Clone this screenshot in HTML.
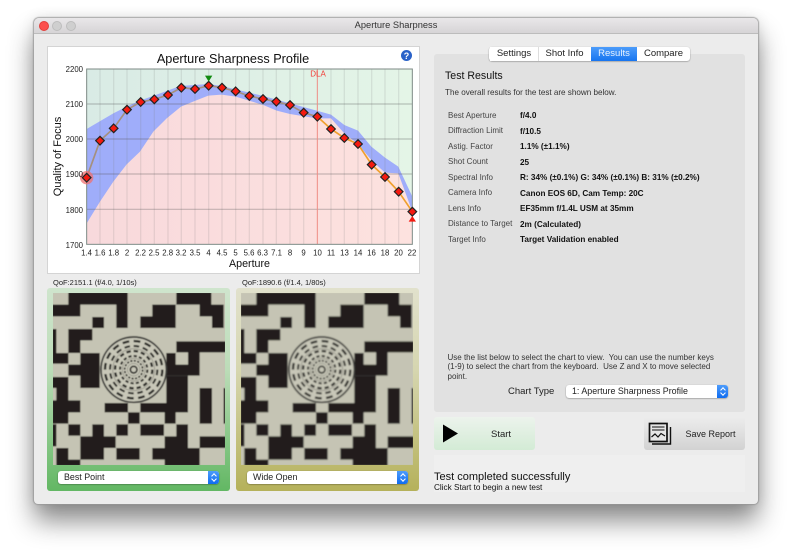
<!DOCTYPE html>
<html><head><meta charset="utf-8">
<style>
html,body{margin:0;padding:0;background:#fff}
body{width:791px;height:555px;position:relative;overflow:hidden;font-family:"Liberation Sans",sans-serif;color:#111;filter:blur(.3px)}
.abs{position:absolute}
.t{position:absolute;white-space:nowrap}
#win{position:absolute;left:34px;top:18px;width:724px;height:486px;background:#ececec;border-radius:5px 5px 4px 4px;box-shadow:0 0 1px 1px rgba(150,150,150,.8),0 17px 26px 0 rgba(0,0,0,.46),0 0 14px rgba(0,0,0,.1)}
#bar{position:absolute;left:34px;top:18px;width:724px;height:15px;background:linear-gradient(#e9e7e9,#d6d4d6);border-bottom:1px solid #bcbcbc;border-radius:5px 5px 0 0;text-align:center;font-size:9.3px;line-height:15px;color:#333}
.dot{position:absolute;top:21px;width:8px;height:8px;border-radius:50%;background:#cfcfcf;border:.5px solid #bdbdbd}
.sel{position:absolute;background:#fff;border-radius:3px;box-shadow:0 .5px 1.5px rgba(0,0,0,.4);font-size:8.9px;line-height:13px;padding-left:6px;box-sizing:border-box;color:#222}
.sel i{position:absolute;right:0;top:0;bottom:0;width:11px;background:linear-gradient(#4d9cfb,#0f6cf0);border-radius:0 3px 3px 0}
.sel i:before,.sel i:after{content:"";position:absolute;left:3.5px;width:3px;height:3px;border-left:1px solid #fff;border-top:1px solid #fff;transform:rotate(45deg);top:3px}
.sel i:after{transform:rotate(225deg);top:auto;bottom:3px}
.lab{position:absolute;left:448px;font-size:8px;color:#444;white-space:nowrap}
.val{position:absolute;left:520px;font-size:8.2px;font-weight:bold;color:#111;white-space:nowrap}
.tab{position:absolute;top:47px;height:14px;font-size:9.5px;line-height:14px;text-align:center;color:#222;background:#fff}
</style></head>
<body>
<div id="win"></div>
<div id="bar">Aperture Sharpness</div>
<div class="dot" style="left:39px;background:#fc4f4c;border-color:#e33e3b"></div>
<div class="dot" style="left:52px"></div>
<div class="dot" style="left:66px"></div>

<!-- chart panel -->
<div class="abs" style="left:47px;top:46px;width:371px;height:226px;background:#fff;border:1px solid #d4d4d4"></div>
<svg class="abs" style="left:0;top:0" width="791" height="290" viewBox="0 0 791 290">
<defs><linearGradient id="gb" x1="0" x2="1"><stop offset="0" stop-color="#d9ebe5"/><stop offset="1" stop-color="#e4f5e7"/></linearGradient>
<linearGradient id="pb" x1="0" x2="1"><stop offset="0" stop-color="#f8d9dc"/><stop offset="1" stop-color="#fde2df"/></linearGradient></defs>
<g transform="translate(30,10) scale(.33333)">
<rect x="170" y="177" width="977" height="526" fill="url(#gb)"/>
<path fill="#9fadfa" d="M170 357L250 310 290 290 330 272 410 243 450 228 535 222 575 228 700 258 860 302 903 314 943 345 984 362 1024 410 1065 443 1105 470 1147 560V703H170Z"/>
<path fill="url(#pb)" d="M170 640L210 575 250 515 290 463 330 425 370 365 410 325 453 290 494 273 535 257 575 254 617 260 700 285 740 302 780 312 860 325 903 325 943 370 984 402 1024 450 1065 488 1105 490 1147 605V703H170Z"/>
<g stroke="#7d7d7d" stroke-opacity=".16" stroke-width="4" id="vg">
<path d="M210 177V703M251 177V703M291 177V703M332 177V703M373 177V703M414 177V703M454 177V703M495 177V703M536 177V703M576 177V703M617 177V703M658 177V703M699 177V703M739 177V703M780 177V703M821 177V703M903 177V703M943 177V703M984 177V703M1025 177V703M1065 177V703M1106 177V703"/>
</g>
<g stroke="#555" stroke-opacity=".32" stroke-width="3.5">
<path d="M170 282H1147M170 387H1147M170 492H1147M170 598H1147"/>
</g>
<path d="M862 177V703" stroke="#ef8d85" stroke-width="3"/>
<rect x="170" y="177" width="977" height="526" fill="none" stroke="#7d8a85" stroke-width="3"/>
<path d="M170 503L210 392 251 355 291 299 332 276 373 268 414 255 454 233 495 237 536 227 576 233 617 244 658 258 699 267 739 275 780 285 821 308 862 320" fill="none" stroke="#a5907e" stroke-width="5"/>
<path d="M862 320L903 357 943 384 984 402 1025 464 1065 501 1106 545 1147 605" fill="none" stroke="#efa02e" stroke-width="5"/>
<circle cx="170" cy="503" r="20" fill="#f07070" fill-opacity=".75"/>
<g fill="#f41a10" stroke="#222" stroke-width="3.5" id="pts">
<path d="M170 490l13 13-13 13-13-13zM210 379l13 13-13 13-13-13zM251 342l13 13-13 13-13-13zM291 286l13 13-13 13-13-13zM332 263l13 13-13 13-13-13zM373 255l13 13-13 13-13-13zM414 242l13 13-13 13-13-13zM454 220l13 13-13 13-13-13zM495 224l13 13-13 13-13-13zM536 214l13 13-13 13-13-13zM576 220l13 13-13 13-13-13zM617 231l13 13-13 13-13-13zM658 245l13 13-13 13-13-13zM699 254l13 13-13 13-13-13zM739 262l13 13-13 13-13-13zM780 272l13 13-13 13-13-13zM821 295l13 13-13 13-13-13zM862 307l13 13-13 13-13-13zM903 344l13 13-13 13-13-13zM943 371l13 13-13 13-13-13zM984 389l13 13-13 13-13-13zM1025 451l13 13-13 13-13-13zM1065 488l13 13-13 13-13-13zM1106 532l13 13-13 13-13-13zM1147 592l13 13-13 13-13-13z"/>
</g>
<path d="M525 197H547L536 215Z" fill="#118a11"/>
<path d="M1136 635H1158L1147 618Z" fill="#f41a10"/>
</g>
<text x="233" y="63" text-anchor="middle" font-size="12.7" fill="#111">Aperture Sharpness Profile</text>
<circle cx="406.500" cy="55.500" r="5.500" fill="#2a62c8"/>
<text x="406.500" y="59" text-anchor="middle" font-size="9" font-weight="bold" fill="#fff">?</text>
<text x="318" y="76.500" text-anchor="middle" font-size="8" fill="#f23c36">DLA</text>
<g font-size="7.8" fill="#222" text-anchor="end">
<text x="83" y="72">2200</text><text x="83" y="107">2100</text><text x="83" y="142">2000</text><text x="83" y="177">1900</text><text x="83" y="213">1800</text><text x="83" y="248">1700</text>
</g>
<g font-size="7.8" fill="#222" text-anchor="middle">
<text x="86.500" y="255.500">1.4</text><text x="100" y="255.500">1.6</text><text x="113.700" y="255.500">1.8</text><text x="127" y="255.500">2</text><text x="140.500" y="255.500">2.2</text><text x="154" y="255.500">2.5</text><text x="167.700" y="255.500">2.8</text><text x="181" y="255.500">3.2</text><text x="195" y="255.500">3.5</text><text x="208.500" y="255.500">4</text><text x="222" y="255.500">4.5</text><text x="235.500" y="255.500">5</text><text x="249" y="255.500">5.6</text><text x="262.500" y="255.500">6.3</text><text x="276.500" y="255.500">7.1</text><text x="290" y="255.500">8</text><text x="303.500" y="255.500">9</text><text x="317.500" y="255.500">10</text><text x="331" y="255.500">11</text><text x="344.500" y="255.500">13</text><text x="358" y="255.500">14</text><text x="371.500" y="255.500">16</text><text x="385" y="255.500">18</text><text x="398.500" y="255.500">20</text><text x="412" y="255.500">22</text>
</g>
<text x="249.500" y="267" text-anchor="middle" font-size="10.7" fill="#111">Aperture</text>
<text transform="translate(61,156.500) rotate(-90)" text-anchor="middle" font-size="11" fill="#111">Quality of Focus</text>
</svg>

<!-- image captions -->
<div class="t" style="left:53px;top:278px;font-size:7.5px;color:#222">QoF:2151.1 (f/4.0, 1/10s)</div>
<div class="t" style="left:242px;top:278px;font-size:7.5px;color:#222">QoF:1890.6 (f/1.4, 1/80s)</div>

<!-- image panels -->
<div class="abs" style="left:47px;top:288px;width:183px;height:203px;border-radius:3px;background:linear-gradient(#cfe5cd,#bcdcb8 40%,#62b763)"></div>
<div class="abs" style="left:236px;top:288px;width:183px;height:203px;border-radius:3px;background:linear-gradient(#e1e1cc,#d6d6b0 40%,#b5b15a)"></div>

<svg class="abs" style="left:53px;top:293px" width="172" height="172" viewBox="10 10 516 516">
<defs>
<filter id="b" x="-2%" y="-2%" width="104%" height="104%"><feGaussianBlur stdDeviation="1.300"/></filter>
<filter id="b2" x="-2%" y="-2%" width="104%" height="104%"><feGaussianBlur stdDeviation="2.400"/></filter>
<g id="pat">
<rect x="8" y="8" width="520" height="520" fill="#c5c4b4"/>
<g fill="#211f1b">
<path d="M56 8H234V115H200V45H92V80H8V45H56Z"/>
<path d="M380 8H485V45H522V115H487V80H450V45H380Z"/>
<path d="M308 45H378V115H272V80H308Z"/>
<rect x="128" y="82" width="35" height="33"/>
<rect x="8" y="118" width="12" height="72"/>
<path d="M56 118H128V152H92V190H56Z"/>
<path d="M380 155H528V188H450V258H350V190H378V225H415V188H380Z"/>
<rect x="8" y="190" width="48" height="32"/>
<path d="M92 190H150V295H92V258H56V225H92Z"/>
<path d="M8 262H56V332H92V368H56V402H8V332H20V295H8Z"/>
<path d="M350 258H415V368H378V402H345V368H272V340H350Z"/>
<rect x="165" y="340" width="70" height="28"/>
<rect x="235" y="368" width="35" height="34"/>
<rect x="450" y="295" width="37" height="107"/>
<rect x="522" y="295" width="6" height="107"/>
<rect x="8" y="404" width="12" height="66"/>
<rect x="56" y="404" width="36" height="34"/>
<rect x="200" y="404" width="35" height="34"/>
<rect x="272" y="404" width="71" height="34"/>
<path d="M128 404H163V440H198V475H163V510H92V440H128Z"/>
<rect x="200" y="475" width="70" height="35"/>
<path d="M380 404H415V528H345V510H308V475H345V440H380Z"/>
<path d="M450 440H528V475H450V528H415V475H450Z"/>
<path d="M20 475H56V510H92V528H20Z"/>
</g>
<g transform="translate(252,240)" fill="none">
<circle r="98" fill="#c8c7b8" stroke="#3b3a38" stroke-width="5"/>
<g stroke="#2a2927">
<circle r="86" stroke-width="7" pathLength="16" stroke-dasharray=".6 .4"/>
<circle r="71" stroke-width="6" pathLength="16" stroke-dasharray=".6 .4"/>
<circle r="56" stroke-width="7" pathLength="16" stroke-dasharray=".6 .4"/>
<circle r="41" stroke-width="6" pathLength="16" stroke-dasharray=".6 .4"/>
<circle r="27" stroke-width="5" pathLength="16" stroke-dasharray=".6 .4"/>
</g>
<g stroke="#55534f" stroke-width="1.200">
<circle r="63"/><circle r="34"/><circle r="19"/>
</g>
<circle r="10" stroke="#2a2927" stroke-width="5" fill="#c8c7b8"/>
</g>
</g>
</defs>
<g filter="url(#b)"><use href="#pat"/></g>
</svg>
<svg class="abs" style="left:241px;top:293px" width="172" height="172" viewBox="10 10 516 516">
<g filter="url(#b2)"><use href="#pat"/></g>
</svg>

<div class="sel" style="left:58px;top:471px;width:161px;height:13px">Best Point<i></i></div>
<div class="sel" style="left:247px;top:471px;width:161px;height:13px">Wide Open<i></i></div>

<!-- right panel -->
<div class="abs" style="left:434px;top:54px;width:311px;height:358px;background:#e1e1e1;border-radius:3px"></div>
<div class="abs" style="left:489px;top:47px;width:201px;height:14px;background:#fff;border-radius:3px;box-shadow:0 .5px 1.5px rgba(0,0,0,.4)"></div>
<div class="tab" style="left:490px;width:48px;border-right:1px solid #ddd">Settings</div>
<div class="tab" style="left:539px;width:51px">Shot Info</div>
<div class="tab" style="left:591px;width:46px;background:linear-gradient(#4c9cfa,#1775f0);color:#e8f2ff">Results</div>
<div class="tab" style="left:638px;width:51px;border-radius:0 3px 3px 0">Compare</div>

<div class="t" style="left:445px;top:69.500px;font-size:10.6px;color:#111">Test Results</div>
<div class="t" style="left:445px;top:88px;font-size:8.1px;color:#333">The overall results for the test are shown below.</div>

<div class="lab" style="top:110.500px">Best Aperture</div><div class="val" style="top:111px">f/4.0</div>
<div class="lab" style="top:126px">Diffraction Limit</div><div class="val" style="top:126.500px">f/10.5</div>
<div class="lab" style="top:141.500px">Astig. Factor</div><div class="val" style="top:142px">1.1% (±1.1%)</div>
<div class="lab" style="top:157px">Shot Count</div><div class="val" style="top:157.500px">25</div>
<div class="lab" style="top:172.500px">Spectral Info</div><div class="val" style="top:173px">R: 34% (±0.1%) G: 34% (±0.1%) B: 31% (±0.2%)</div>
<div class="lab" style="top:188px">Camera Info</div><div class="val" style="top:188.500px">Canon EOS 6D, Cam Temp: 20C</div>
<div class="lab" style="top:203.500px">Lens Info</div><div class="val" style="top:204px">EF35mm f/1.4L USM at 35mm</div>
<div class="lab" style="top:219px">Distance to Target</div><div class="val" style="top:219.500px">2m (Calculated)</div>
<div class="lab" style="top:234.500px">Target Info</div><div class="val" style="top:235px">Target Validation enabled</div>

<div class="t" style="left:447.500px;top:352.500px;font-size:8px;line-height:9.500px;color:#333">Use the list below to select the chart to view.&nbsp; You can use the number keys<br>(1-9) to select the chart from the keyboard.&nbsp; Use Z and X to move selected<br>point.</div>
<div class="t" style="left:508px;top:386px;font-size:9.500px;color:#222">Chart Type</div>
<div class="sel" style="left:566px;top:385px;width:162px;height:13px">1: Aperture Sharpness Profile<i></i></div>

<!-- buttons -->
<div class="abs" style="left:434px;top:417px;width:101px;height:33px;border-radius:3px;background:linear-gradient(#ecf3ec,#d3ebd5)"></div>
<svg class="abs" style="left:442px;top:424px" width="18" height="20"><path d="M1 .5L16 9.500 1 18.500Z" fill="#000"/></svg>
<div class="t" style="left:491px;top:429px;font-size:9.500px;color:#222">Start</div>
<div class="abs" style="left:644px;top:417px;width:101px;height:33px;border-radius:3px;background:linear-gradient(#ececec,#d2d2d2)"></div>
<svg class="abs" style="left:647px;top:421px" width="26" height="26" viewBox="0 0 26 26" fill="none" stroke="#111">
<path d="M5 23H23.500V6" stroke-width="1.400"/><rect x="2.500" y="2.500" width="17.500" height="18" stroke-width="1.700" fill="#e6e6e6"/>
<path d="M5 6H17.500M5 9H17.500" stroke-width=".9"/><path d="M4.500 16L8 13 11 16 14 12.500 18 15" stroke-width="1.200"/>
</svg>
<div class="t" style="left:685.500px;top:429px;font-size:9px;color:#222">Save Report</div>

<div class="abs" style="left:434px;top:455px;width:311px;height:37px;background:#efefef"></div>
<div class="t" style="left:434px;top:470.500px;font-size:11px;color:#111">Test completed successfully</div>
<div class="t" style="left:434px;top:483px;font-size:8.2px;color:#111">Click Start to begin a new test</div>
</body></html>
